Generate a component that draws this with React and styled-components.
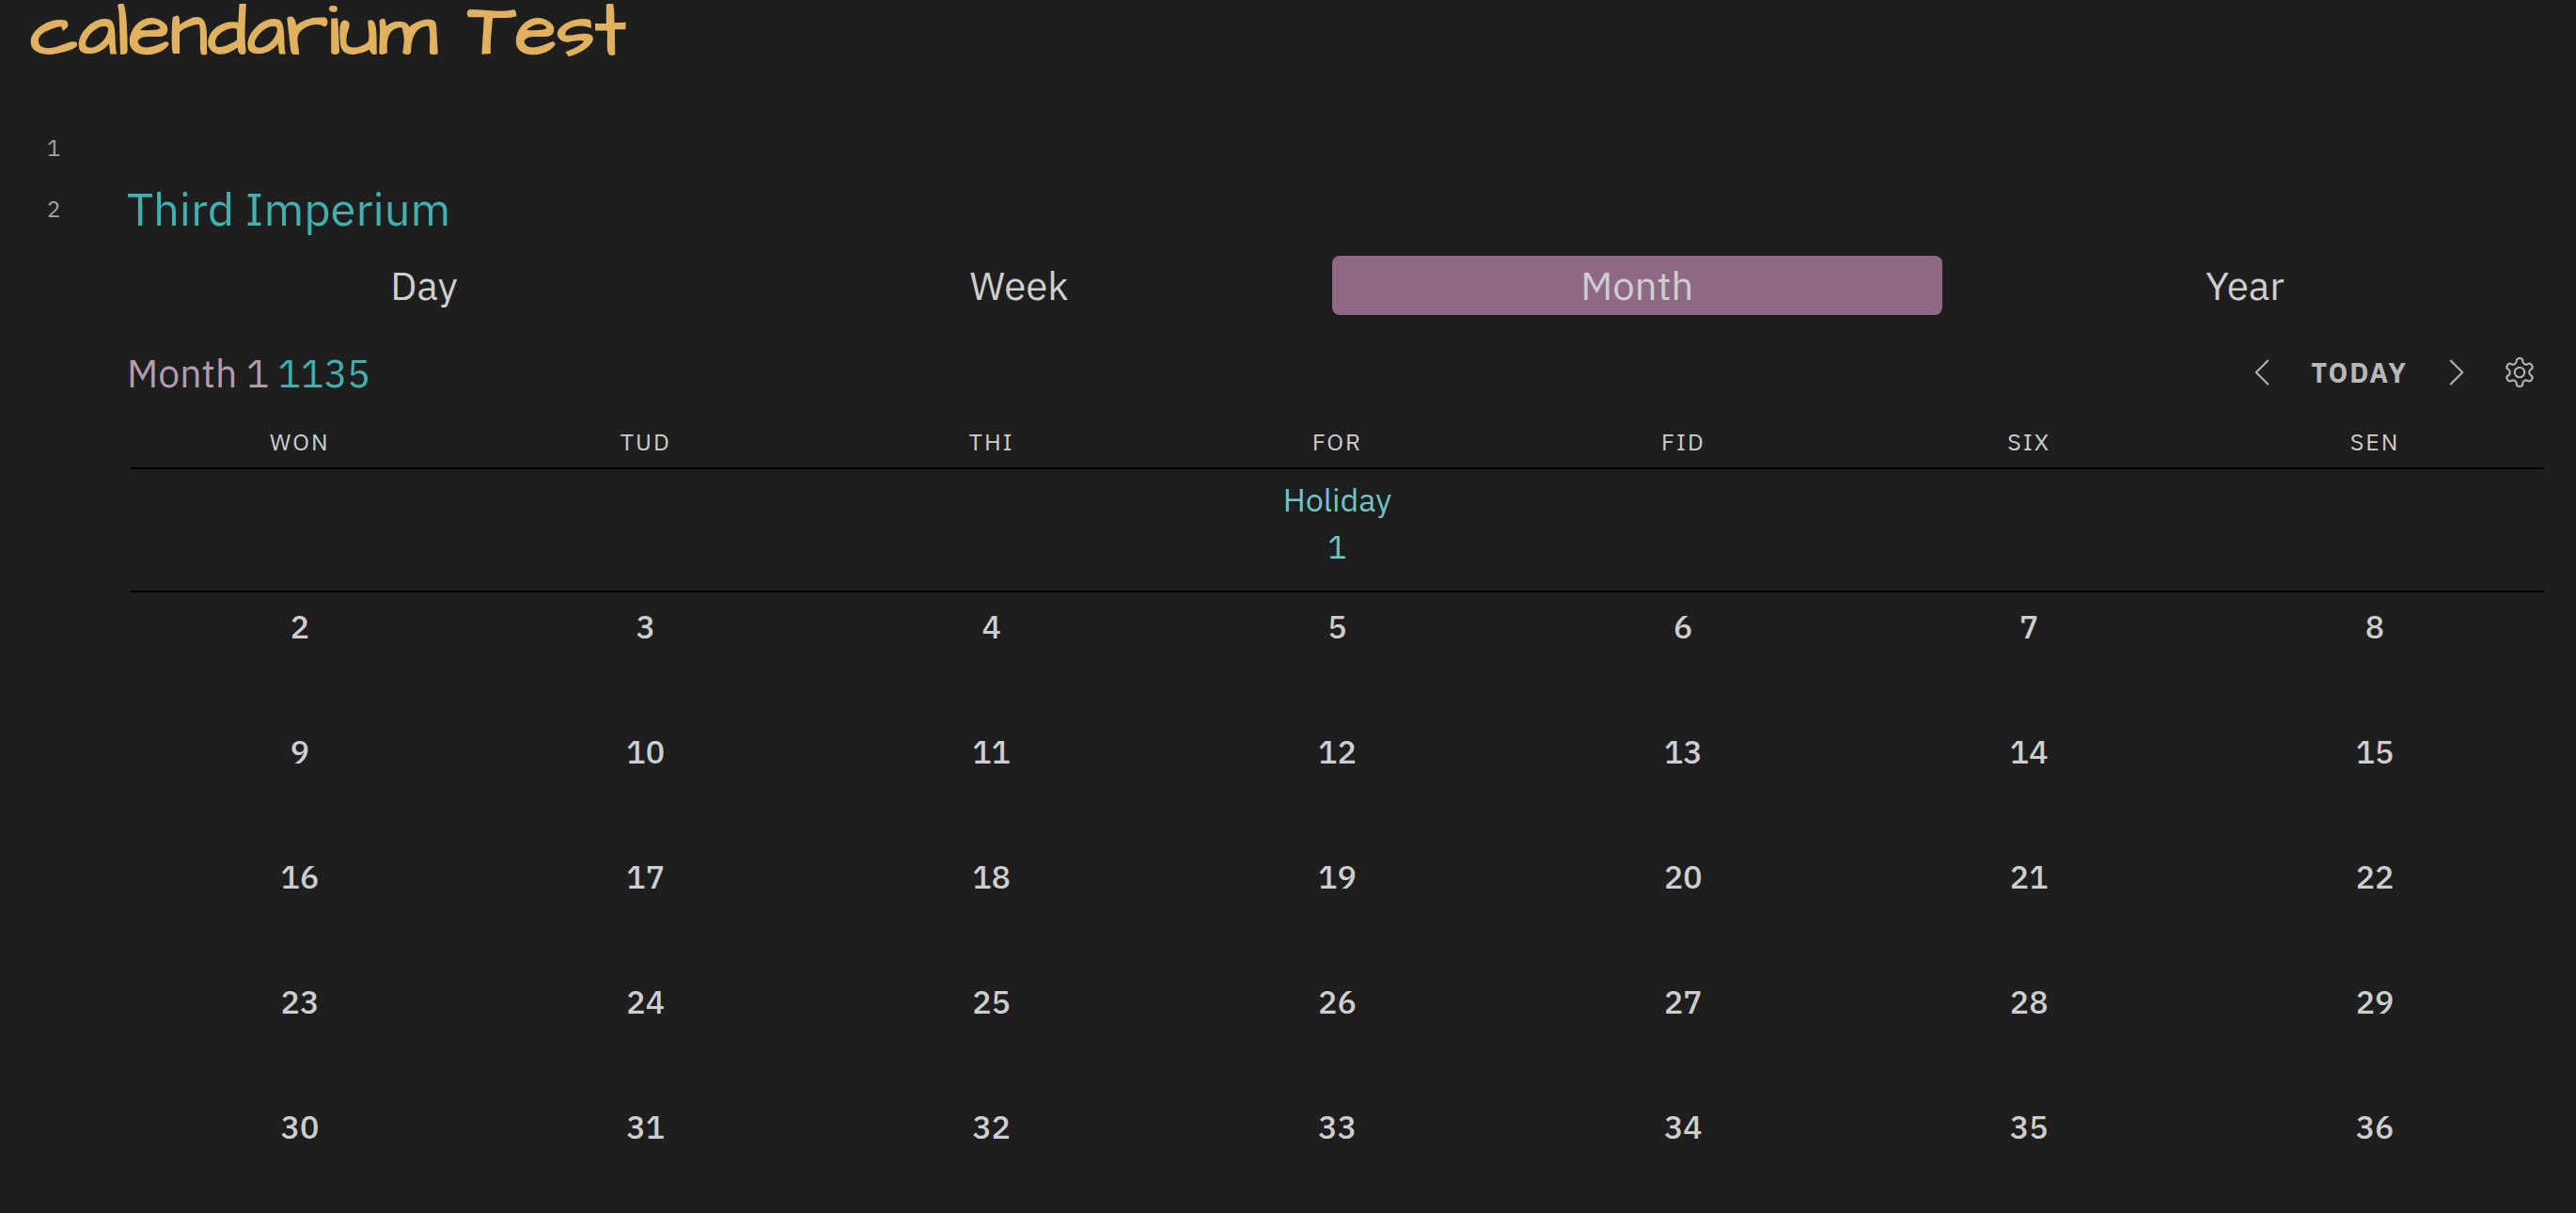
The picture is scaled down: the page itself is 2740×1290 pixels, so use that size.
import React, { useState } from "react";
import styled, { createGlobalStyle } from "styled-components";
import { ChevronLeft, ChevronRight } from "lucide-react";

const GlobalStyle = createGlobalStyle`
  * { box-sizing: border-box; }
  body {
    margin: 0;
    background: #1e1e1e;
    color: #cecece;
    font-family: "IBM Plex Sans", Roboto, sans-serif;
  }
  button { font: inherit; color: inherit; background: none; border: 0; padding: 0; cursor: pointer; }
`;

const Page = styled.main`
  min-height: 100vh;
  padding-top: 4px;
  border-bottom: 1px solid #171315;
`;

const Title = styled.h1`
  margin: 0;
  padding: 0 32px;
  height: 130px;
  overflow: hidden;
  font: 400 81px/60px "Architects Daughter", "DejaVu Sans", sans-serif;
  -webkit-text-stroke: 2px #e0b15e;
  color: #e0b15e;
`;

const Editor = styled.div`
  display: grid;
  grid-template-columns: 135px 1fr;
  padding-right: 30px;
`;

const LineNumber = styled.div`
  padding-left: 50px;
  font-size: 24px;
  line-height: ${(p) => (p.$tall ? 84 : 46)}px;
  color: #a2a2a2;
`;

const CalendarName = styled.h2`
  margin: 0;
  font-size: 49px;
  font-weight: 400;
  line-height: 84px;
  color: #3fb1b1;
`;

const Tabs = styled.nav`
  display: flex;
  gap: 16px;
  padding: 8px 16px 4px;
`;

const Tab = styled.button`
  && {
    flex: 1 1 auto;
    height: 63px;
    border-radius: 8px;
    font-size: 42px;
    line-height: 63px;
    background: ${(p) => (p.$active ? "#8f6886" : "transparent")};
  }
`;

const Toolbar = styled.header`
  display: flex;
  justify-content: space-between;
  align-items: center;
  height: 62px;
  margin-top: 26px;
  padding-right: 12px;
`;

const Period = styled.h3`
  display: flex;
  gap: 9px;
  margin: 0;
  font-size: 41px;
  font-weight: 400;
`;

const MonthName = styled.span`
  color: #b59ab0;
`;

const YearName = styled.span`
  color: #3fb1b1;
`;

const Controls = styled.div`
  display: flex;
  align-items: center;
  color: #b3b3b3;
  gap: ${(p) => p.$gap}px;
`;

const IconButton = styled.button`
  display: flex;
`;

const TodayButton = styled.button`
  && {
    font-size: 29px;
    font-weight: 700;
    letter-spacing: 2px;
    text-transform: uppercase;
    color: #b8b8b8;
  }
`;

const Table = styled.table`
  width: 100%;
  table-layout: fixed;
  border-collapse: collapse;
`;

const Weekday = styled.th`
  height: 70px;
  padding: 14px 0 0;
  font-size: 25px;
  font-weight: 400;
  letter-spacing: 2px;
  text-transform: uppercase;
`;

const Week = styled.tr`
  background: ${(p) =>
    p.$ruled
      ? `linear-gradient(#000, #000) center top / calc(100% - 8px) 2px no-repeat,
         linear-gradient(#000, #000) center bottom / calc(100% - 8px) 2px no-repeat`
      : "none"};
`;

const Day = styled.td`
  height: 133px;
  padding: ${(p) => (p.$holiday ? 9 : 11)}px 0 0;
  vertical-align: top;
  text-align: center;
  font-size: 34px;
  font-weight: ${(p) => (p.$holiday ? 400 : 500)};
  line-height: 50px;
  color: ${(p) => (p.$holiday ? "#70c5c8" : "#cecece")};
`;

const DayLabel = styled.div`
  line-height: 50px;
`;

function Gear() {
  return (
    <svg width="36" height="36" viewBox="0 0 24 24" fill="none" stroke="currentColor" strokeWidth="1.4" aria-hidden="true">
      <path d="M12.22 2h-.44a2 2 0 0 0-2 2v.18a2 2 0 0 1-1 1.73l-.43.25a2 2 0 0 1-2 0l-.15-.08a2 2 0 0 0-2.73.73l-.22.38a2 2 0 0 0 .73 2.73l.15.1a2 2 0 0 1 1 1.72v.51a2 2 0 0 1-1 1.74l-.15.09a2 2 0 0 0-.73 2.73l.22.38a2 2 0 0 0 2.73.73l.15-.08a2 2 0 0 1 2 0l.43.25a2 2 0 0 1 1 1.73V20a2 2 0 0 0 2 2h.44a2 2 0 0 0 2-2v-.18a2 2 0 0 1 1-1.73l.43-.25a2 2 0 0 1 2 0l.15.08a2 2 0 0 0 2.73-.73l.22-.39a2 2 0 0 0-.73-2.73l-.15-.08a2 2 0 0 1-1-1.74v-.5a2 2 0 0 1 1-1.74l.15-.09a2 2 0 0 0 .73-2.73l-.22-.38a2 2 0 0 0-2.73-.73l-.15.08a2 2 0 0 1-2 0l-.43-.25a2 2 0 0 1-1-1.73V4a2 2 0 0 0-2-2z" />
      <circle cx="12" cy="12" r="3.5" />
    </svg>
  );
}

const views = ["Day", "Week", "Month", "Year"];
const weekdays = ["Won", "Tud", "Thi", "For", "Fid", "Six", "Sen"];
const weeks = [2, 9, 16, 23, 30].map((first) => weekdays.map((_, i) => first + i));

export default function App() {
  const [view, setView] = useState("Month");
  return (
    <Page>
      <GlobalStyle />
      <Title>calendarium Test</Title>
      <Editor>
        <LineNumber>1</LineNumber>
        <div />
        <LineNumber $tall>2</LineNumber>
        <section>
          <CalendarName>Third Imperium</CalendarName>
          <Tabs aria-label="Calendar view">
            {views.map((name) => (
              <Tab key={name} $active={name === view} onClick={() => setView(name)}>
                {name}
              </Tab>
            ))}
          </Tabs>
          <Toolbar>
            <Period>
              <MonthName>Month 1</MonthName>
              <YearName>1135</YearName>
            </Period>
            <Controls $gap={24}>
              <Controls $gap={27}>
                <IconButton aria-label="Previous month">
                  <ChevronLeft size={50} strokeWidth={1} />
                </IconButton>
                <TodayButton>Today</TodayButton>
                <IconButton aria-label="Next month">
                  <ChevronRight size={50} strokeWidth={1} />
                </IconButton>
              </Controls>
              <IconButton aria-label="Settings">
                <Gear />
              </IconButton>
            </Controls>
          </Toolbar>
          <Table>
            <thead>
              <tr>
                {weekdays.map((name) => (
                  <Weekday key={name} scope="col">
                    {name}
                  </Weekday>
                ))}
              </tr>
            </thead>
            <tbody>
              <Week $ruled>
                <Day $holiday colSpan={7}>
                  <DayLabel>Holiday</DayLabel>
                  <DayLabel>1</DayLabel>
                </Day>
              </Week>
              {weeks.map((days) => (
                <Week key={days[0]}>
                  {days.map((day) => (
                    <Day key={day}>{day}</Day>
                  ))}
                </Week>
              ))}
            </tbody>
          </Table>
        </section>
      </Editor>
    </Page>
  );
}
